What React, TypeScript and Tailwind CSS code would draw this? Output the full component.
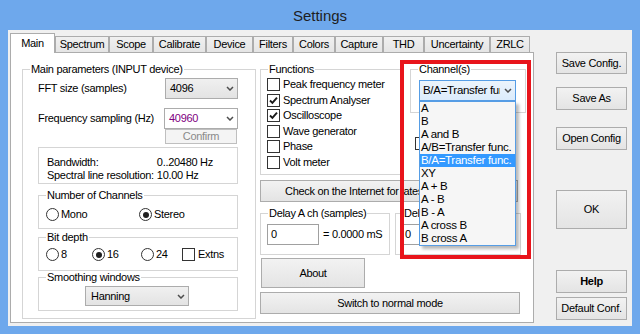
import React from 'react';

type Props = { children?: React.ReactNode; className?: string };

const tabs = [
  { label: 'Main', w: 'w-[45px]' },
  { label: 'Spectrum', w: 'w-[54px]' },
  { label: 'Scope', w: 'w-[44px]' },
  { label: 'Calibrate', w: 'w-[53px]' },
  { label: 'Device', w: 'w-[47px]' },
  { label: 'Filters', w: 'w-[40px]' },
  { label: 'Colors', w: 'w-[42px]' },
  { label: 'Capture', w: 'w-[48px]' },
  { label: 'THD', w: 'w-[41px]' },
  { label: 'Uncertainty', w: 'w-[66px]' },
  { label: 'ZRLC', w: 'w-[40px]' },
];

const functions: [string, boolean][] = [
  ['Peak frequency meter', false],
  ['Spectrum Analyser', true],
  ['Oscilloscope', true],
  ['Wave generator', false],
  ['Phase', false],
  ['Volt meter', false],
];

const channels = [
  'A',
  'B',
  'A and B',
  'A/B=Transfer func.',
  'B/A=Transfer func.',
  'XY',
  'A + B',
  'A - B',
  'B - A',
  'A cross B',
  'B cross A',
];

const Chevron = () => (
  <svg width="8" height="5" viewBox="0 0 8 5" className="shrink-0">
    <path d="M1 1l3 3 3-3" fill="none" stroke="#4d4d4d" strokeWidth="1.5" />
  </svg>
);

const Button = ({ children, className = '' }: Props) => (
  <div
    className={`flex items-center justify-center border border-[#acacac] bg-linear-to-b from-[#f2f2f2] to-[#e4e4e4] ${className}`}
  >
    {children}
  </div>
);

const Check = ({ on = false }: { on?: boolean }) => (
  <span className="w-[13px] h-[13px] border border-[#333] bg-white flex items-center justify-center shrink-0">
    {on && (
      <svg width="9" height="9" viewBox="0 0 9 9">
        <path d="M1 4.5l2.4 2.4L8 1.6" fill="none" stroke="#1a1a1a" strokeWidth="1.9" />
      </svg>
    )}
  </span>
);

const Radio = ({ on = false }: { on?: boolean }) => (
  <span className="w-[13px] h-[13px] rounded-full border border-[#333] bg-white flex items-center justify-center shrink-0">
    {on && <span className="w-[6px] h-[6px] rounded-full bg-[#1e1e1e]" />}
  </span>
);

const Group = ({ label, children, className = '' }: Props & { label: string }) => (
  <fieldset className={`border border-[#d5d5d5] ${className}`}>
    <legend className="ml-[7px] px-[1px] leading-[13px]">{label}</legend>
    {children}
  </fieldset>
);

const GreyCombo = ({ value, className = '' }: { value: string; className?: string }) => (
  <div
    className={`flex items-center justify-between border border-[#acacac] bg-linear-to-b from-[#f0f0f0] to-[#e3e3e3] pl-[4px] pr-[3px] ${className}`}
  >
    <span>{value}</span>
    <Chevron />
  </div>
);

export default function App() {
  return (
    <div className="relative w-[640px] h-[334px] bg-[#6ea8ec] flex flex-col overflow-hidden font-['Liberation_Sans',Arial,sans-serif] text-[11px] leading-[13px] tracking-[-0.3px] text-black">
      {/* title bar */}
      <div className="h-[30px] flex items-center justify-center text-[15px] tracking-normal text-[#1e1e1e] pt-[1px]">
        Settings
      </div>

      {/* client area */}
      <div className="mx-[8px] h-[296px] bg-[#f0f0f0] flex pt-[3px]">
        {/* tab control */}
        <div className="ml-[2px] w-[524px] flex flex-col">
          <div className="h-[19px] flex items-end">
            {tabs.map((t, i) =>
              i === 0 ? (
                <div
                  key={t.label}
                  className={`${t.w} h-[20px] -mb-px relative z-10 bg-white border border-b-0 border-[#acacac] flex justify-center pt-[3px]`}
                >
                  {t.label}
                </div>
              ) : (
                <div
                  key={t.label}
                  className={`${t.w} h-[16px] border border-b-0 border-[#acacac] bg-linear-to-b from-[#f0f0f0] to-[#e5e5e5] flex items-center justify-center`}
                >
                  {t.label}
                </div>
              )
            )}
          </div>

          <div className="h-[271px] border border-[#acacac] bg-white flex pl-[11px] pt-[10px]">
            {/* left column */}
            <Group label="Main parameters (INPUT device)" className="w-[234px] h-[256px] shrink-0">
              <div className="pl-[15px] w-[215px] flex flex-col">
                <div className="mt-[2px] h-[21px] flex items-center justify-between">
                  <span>FFT size (samples)</span>
                  <GreyCombo value="4096" className="w-[73px] h-[21px]" />
                </div>
                <div className="mt-[9px] h-[21px] flex items-center justify-between">
                  <span>Frequency sampling (Hz)</span>
                  <div className="w-[74px] h-[21px] border border-[#acacac] bg-white flex items-center justify-between pl-[4px] pr-[3px]">
                    <span className="text-[#800080]">40960</span>
                    <Chevron />
                  </div>
                </div>
                <div className="self-end mr-[1px] w-[72px] h-[15px] border border-[#bfbfbf] bg-[#f4f4f4] text-[#8a8a8a] flex items-center justify-center">
                  Confirm
                </div>
                <div className="mt-[3px] w-[200px] h-[37px] border border-[#d5d5d5] pl-[8px] pt-[9px] grid grid-cols-[auto_auto] justify-start gap-x-[3px] leading-[11px]">
                  <span>Bandwidth:</span>
                  <span>0..20480 Hz</span>
                  <span>Spectral line resolution:</span>
                  <span>10.00 Hz</span>
                </div>

                <Group label="Number of Channels" className="mt-[5px] w-[200px] h-[40px]">
                  <div className="mt-[6px] pl-[7px] flex items-center">
                    <div className="w-[93px] flex items-center gap-[2px]">
                      <Radio />
                      Mono
                    </div>
                    <div className="flex items-center gap-[2px]">
                      <Radio on />
                      Stereo
                    </div>
                  </div>
                </Group>

                <Group label="Bit depth" className="mt-[2px] w-[200px] h-[40px]">
                  <div className="mt-[4px] pl-[7px] flex items-center">
                    <div className="w-[46px] flex items-center gap-[2px]">
                      <Radio />8
                    </div>
                    <div className="w-[49px] flex items-center gap-[2px]">
                      <Radio on />
                      16
                    </div>
                    <div className="w-[41px] flex items-center gap-[2px]">
                      <Radio />
                      24
                    </div>
                    <div className="flex items-center gap-[3px]">
                      <Check />
                      Extns
                    </div>
                  </div>
                </Group>

                <Group label="Smoothing windows" className="w-[200px] h-[40px]">
                  <GreyCombo value="Hanning" className="mt-[2px] ml-[46px] w-[104px] h-[20px] pl-[5px]" />
                </Group>
              </div>
            </Group>

            {/* middle column */}
            <div className="ml-[4px] w-[266px] flex flex-col">
              <div className="flex">
                <Group label="Functions" className="w-[141px] h-[112px] shrink-0">
                  <div className="pl-[6px] mt-[1px] flex flex-col">
                    {functions.map(([t, on]) => (
                      <div key={t} className="h-[15.5px] flex items-center gap-[3px] whitespace-nowrap">
                        <Check on={on} />
                        {t}
                      </div>
                    ))}
                  </div>
                </Group>
                <div className="ml-[9px] flex flex-col">
                  <Group label="Channel(s)" className="w-[116px] h-[50px]">
                    <div className="relative ml-[8px] mt-[4px] w-[97px] text-[11.5px]">
                      <div className="h-[21px] border border-[#569de5] bg-linear-to-b from-[#ecf4fc] to-[#dcecfc] flex items-center pl-[3px] pr-[3px] gap-[4px]">
                        <span className="flex-1 overflow-hidden whitespace-nowrap">B/A=Transfer func.</span>
                        <Chevron />
                      </div>
                      <div className="absolute left-0 top-full z-20 w-[97px] border border-[#569de5] bg-[#f6f6f6] shadow-[3px_3px_3px_rgba(0,0,0,0.28)] flex flex-col">
                        {channels.map((c) => (
                          <div
                            key={c}
                            className={`h-[13px] leading-[13px] pl-[1px] whitespace-nowrap ${
                              c === 'B/A=Transfer func.' ? 'bg-[#3399ff] text-white' : ''
                            }`}
                          >
                            {c}
                          </div>
                        ))}
                      </div>
                    </div>
                  </Group>
                  <div className="ml-[5px] mt-[24px]">
                    <Check />
                  </div>
                </div>
              </div>

              <Button className="mt-[5px] w-[258px] h-[22px] whitespace-nowrap justify-start! pl-[24px]">
                Check on the Internet for latest version
              </Button>

              <div className="mt-[5px] flex">
                <Group label="Delay A ch (samples)" className="w-[130px] h-[48px] shrink-0">
                  <div className="mt-[4px] ml-[6px] flex items-center">
                    <div className="w-[52px] h-[21px] border border-[#a0a0a0] bg-white flex items-center pl-[3px]">0</div>
                    <span className="ml-[4px]">= 0.0000 mS</span>
                  </div>
                </Group>
                <Group label="Delay B ch (samples)" className="ml-[5px] w-[126px] h-[48px] shrink-0 overflow-hidden">
                  <div className="mt-[4px] ml-[5px] flex items-center">
                    <div className="w-[52px] h-[21px] border border-[#a0a0a0] bg-white flex items-center pl-[3px]">0</div>
                  </div>
                </Group>
              </div>

              <Button className="mt-[3px] ml-[1px] w-[104px] h-[30px]">About</Button>
              <Button className="mt-[4px] w-[260px] h-[22px]">Switch to normal mode</Button>
            </div>
          </div>
        </div>

        {/* right buttons */}
        <div className="ml-[22px] w-[71px] flex flex-col">
          <Button className="mt-[19px] h-[22px]">Save Config.</Button>
          <Button className="mt-[13px] h-[23px]">Save As</Button>
          <Button className="mt-[17px] h-[23px]">Open Config</Button>
          <Button className="mt-[40px] h-[39px]">OK</Button>
          <Button className="mt-[41px] h-[23px] font-bold">Help</Button>
          <Button className="mt-[4px] h-[23px]">Default Conf.</Button>
        </div>
      </div>

      {/* red highlight frame */}
      <div className="absolute left-[400px] top-[60px] w-[131px] h-[199px] border-4 border-[#e8141b] z-30 pointer-events-none" />
    </div>
  );
}
